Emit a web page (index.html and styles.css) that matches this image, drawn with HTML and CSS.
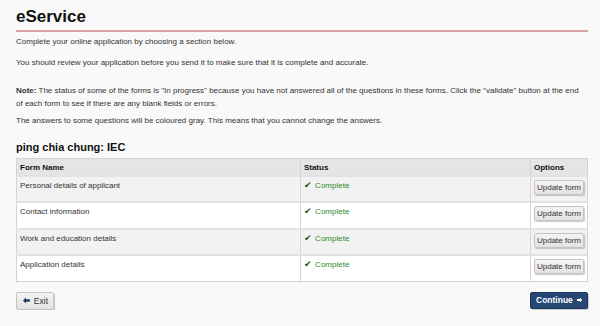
FILE: index.html
```html
<!DOCTYPE html>
<html lang="en">
<head>
    <meta charset="UTF-8">
    <meta name="viewport" content="width=device-width, initial-scale=1.0">
    <title>eService</title>
    <link rel="stylesheet" href="styles.css">
</head>
<body>
    <div class="page">
        <h1>eService</h1>
        <p class="lead">Complete your online application by choosing a section below.</p>
        <p>You should review your application before you send it to make sure that it is complete and accurate.</p>

        <p class="note"><strong>Note:</strong> The status of some of the forms is "In progress" because you have not answered all of the questions in these forms. Click the "validate" button at the end of each form to see if there are any blank fields or errors.</p>
        <p>The answers to some questions will be coloured gray. This means that you cannot change the answers.</p>

        <h2>ping chia chung: IEC</h2>

        <table class="forms">
            <thead>
                <tr>
                    <th class="col-name">Form Name</th>
                    <th class="col-status">Status</th>
                    <th class="col-options">Options</th>
                </tr>
            </thead>
            <tbody>
                <tr>
                    <td>Personal details of applicant</td>
                    <td><span class="status"><span class="tick">&#10004;</span> Complete</span></td>
                    <td class="options"><button class="btn btn-small">Update form</button></td>
                </tr>
                <tr>
                    <td>Contact information</td>
                    <td><span class="status"><span class="tick">&#10004;</span> Complete</span></td>
                    <td class="options"><button class="btn btn-small">Update form</button></td>
                </tr>
                <tr>
                    <td>Work and education details</td>
                    <td><span class="status"><span class="tick">&#10004;</span> Complete</span></td>
                    <td class="options"><button class="btn btn-small">Update form</button></td>
                </tr>
                <tr>
                    <td>Application details</td>
                    <td><span class="status"><span class="tick">&#10004;</span> Complete</span></td>
                    <td class="options"><button class="btn btn-small">Update form</button></td>
                </tr>
            </tbody>
        </table>

        <div class="actions">
            <button class="btn btn-exit">
                <svg class="arrow" width="8" height="7" viewBox="0 0 8 7"><polygon points="0,3.5 3.5,0 3.5,2 8,2 8,5 3.5,5 3.5,7" fill="#1f3a63"/></svg>
                Exit
            </button>
            <button class="btn btn-primary">
                Continue
                <svg class="arrow" width="9" height="8" viewBox="0 0 9 8"><polygon points="9,4 5,0 5,2.3 0,2.3 0,5.7 5,5.7 5,8" fill="#ffffff"/></svg>
            </button>
        </div>
    </div>
</body>
</html>
```

FILE: styles.css
```css
body {
    margin: 0;
    padding: 0;
    background: #f9f9f9;
    color: #333;
    font-family: "Liberation Sans", Arial, sans-serif;
    font-size: 8px;
    line-height: 13px;
}

.page {
    padding: 6px 12px 0 16px;
}

h1 {
    margin: 0;
    padding-bottom: 3px;
    font-size: 17px;
    line-height: 21px;
    color: #111;
    border-bottom: 2px solid #d9a3a8;
}

p {
    margin: 4px 0;
}

.lead {
    margin-top: 3px;
    margin-bottom: 8px;
}

.note {
    margin-top: 15px;
    padding-right: 6px;
}

h2 {
    margin: 12px 0 3px;
    font-size: 11px;
    line-height: 16px;
    color: #111;
}

.forms {
    width: 100%;
    border-collapse: collapse;
    border: 1px solid #d4d4d4;
}

.forms th {
    background: #e5e5e5;
    color: #111;
    text-align: left;
    font-size: 8px;
    height: 16px;
    padding: 0 3px;
    border-left: 1px solid #d4d4d4;
}

.forms td {
    vertical-align: top;
    height: 26.25px;
    padding: 2px 3px 0;
    border-top: 2px solid #e2e2e2;
    border-left: 1px solid #d4d4d4;
    box-sizing: border-box;
}

.forms tbody tr:nth-child(odd) td {
    background: #f2f2f2;
}

.forms tbody tr:nth-child(even) td {
    background: #fff;
}

.col-name {
    width: 283px;
}

.col-status {
    width: 228px;
}

.status {
    color: #2e8b2e;
}

.tick {
    color: #1f5e1a;
    font-size: 9px;
    margin-right: 1px;
}

.options {
    padding: 4px 0 0 5px;
}

.btn {
    font-family: "Liberation Sans", Arial, sans-serif;
    font-size: 8px;
    color: #333;
    background: linear-gradient(to bottom, #f4f4f4, #e2e2e2);
    border: 1px solid #c4c4c4;
    border-radius: 2px;
    box-shadow: 1px 1px 1px rgba(0, 0, 0, 0.2);
    cursor: pointer;
}

.btn-small {
    width: 50px;
    height: 15px;
    padding: 0;
    margin-top: 1px;
}

.actions {
    display: flex;
    justify-content: space-between;
    margin-top: 10px;
}

.btn-exit {
    width: 38px;
    height: 18px;
    padding: 0 5px 0 6px;
    display: flex;
    align-items: center;
    gap: 4px;
    font-size: 8.5px;
}

.btn-primary {
    width: 58px;
    height: 17px;
    padding: 0 5px;
    display: flex;
    align-items: center;
    gap: 4px;
    background: #264673;
    border-color: #1b3458;
    color: #fff;
    font-weight: bold;
    font-size: 8.5px;
}
```
